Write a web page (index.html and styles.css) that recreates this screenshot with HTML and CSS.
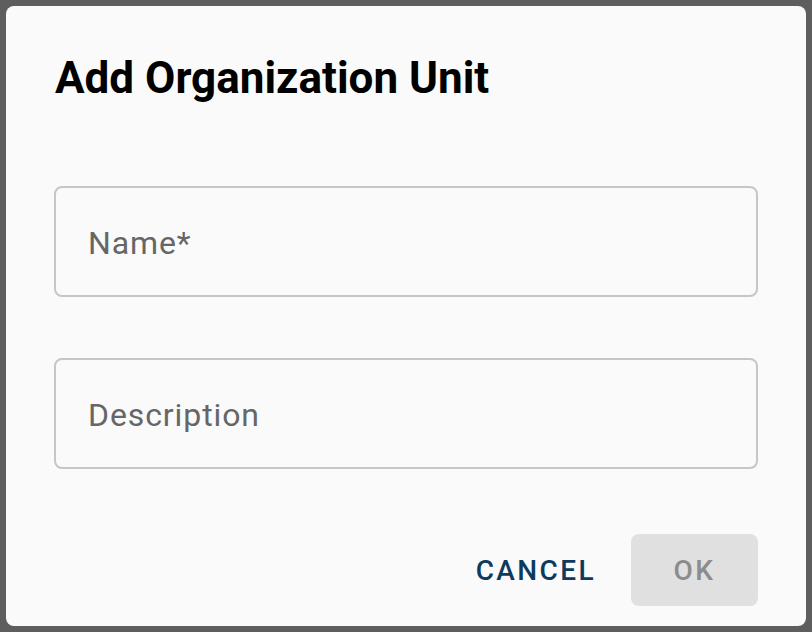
FILE: index.html
```html
<!DOCTYPE html>
<html lang="en">
<head>
  <meta charset="UTF-8">
  <meta name="viewport" content="width=device-width, initial-scale=1.0">
  <title>Add Organization Unit</title>
  <link rel="stylesheet" href="styles.css">
</head>
<body>
  <div class="dialog">
    <h2 class="dialog-title">Add Organization Unit</h2>
    <div class="dialog-content">
      <div class="text-field">
        <label for="unitName">Name*</label>
        <input id="unitName" type="text">
      </div>
      <div class="text-field">
        <label for="unitDescription">Description</label>
        <input id="unitDescription" type="text">
      </div>
    </div>
    <div class="dialog-actions">
      <button class="btn btn-text">Cancel</button>
      <button class="btn btn-contained" disabled>OK</button>
    </div>
  </div>
</body>
</html>
```

FILE: styles.css
```css
html, body {
  height: 100%;
}
body {
  margin: 0;
  padding: 6px;
  box-sizing: border-box;
  background-color: #5e5e5e;
  font-family: Roboto, "Liberation Sans", Arial, sans-serif;
}
.dialog {
  height: 620px;
  box-sizing: border-box;
  padding: 46px 48px 20px 48px;
  background-color: #fafafa;
  border-radius: 8px;
  display: flex;
  flex-direction: column;
}
.dialog-title {
  margin: 0 0 0 1px;
  font-size: 44px;
  line-height: 52px;
  font-weight: 700;
  color: #000;
}
.dialog-content {
  margin-top: 82px;
  display: flex;
  flex-direction: column;
  gap: 61px;
}
.text-field {
  position: relative;
  height: 111px;
  box-sizing: border-box;
  border: 2px solid #c6c6c6;
  border-radius: 8px;
  display: flex;
  align-items: center;
  padding: 3px 32px 0 32px;
}
.text-field label {
  font-size: 32px;
  letter-spacing: 0.9px;
  color: #666;
}
.text-field input {
  position: absolute;
  inset: 0;
  width: 100%;
  border: none;
  background: transparent;
  outline: none;
}
.dialog-actions {
  margin-top: auto;
  display: flex;
  justify-content: flex-end;
  align-items: center;
  gap: 19px;
}
.btn {
  height: 72px;
  border: none;
  border-radius: 8px;
  font-family: inherit;
  font-size: 28px;
  font-weight: 500;
  letter-spacing: 2.4px;
  text-transform: uppercase;
  background: transparent;
  cursor: pointer;
}
.btn-text {
  padding: 0 16px;
  color: #0c3b5e;
}
.btn-contained {
  width: 127px;
  padding: 0;
  background-color: #e0e0e0;
  color: #8c8c8c;
}
```
